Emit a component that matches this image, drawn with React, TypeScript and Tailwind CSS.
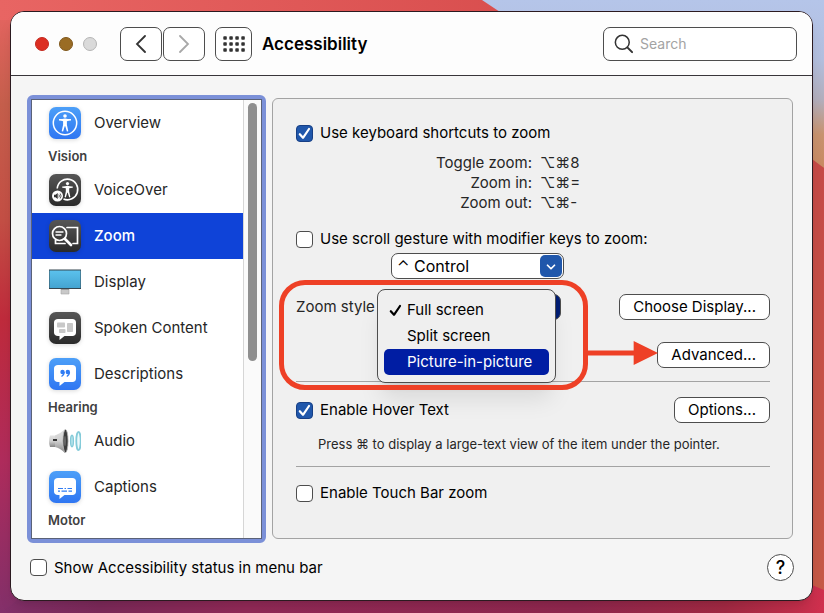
import { useState } from "react";
import type { ReactNode } from "react";
import { ChevronDown } from "lucide-react";
import clsx from "clsx";

type IconName =
  | "overview"
  | "voiceover"
  | "zoom"
  | "display"
  | "spoken"
  | "descriptions"
  | "audio"
  | "captions";

interface SidebarGroup {
  title?: string;
  items: { label: string; icon: IconName }[];
}

const groups: SidebarGroup[] = [
  { items: [{ label: "Overview", icon: "overview" }] },
  {
    title: "Vision",
    items: [
      { label: "VoiceOver", icon: "voiceover" },
      { label: "Zoom", icon: "zoom" },
      { label: "Display", icon: "display" },
      { label: "Spoken Content", icon: "spoken" },
      { label: "Descriptions", icon: "descriptions" }
    ]
  },
  {
    title: "Hearing",
    items: [
      { label: "Audio", icon: "audio" },
      { label: "Captions", icon: "captions" }
    ]
  },
  { title: "Motor", items: [] }
];

const shortcuts = [
  { label: "Toggle zoom:", keys: "⌥⌘8" },
  { label: "Zoom in:", keys: "⌥⌘=" },
  { label: "Zoom out:", keys: "⌥⌘-" }
];

const zoomStyles = ["Full screen", "Split screen", "Picture-in-picture"];

function Wallpaper() {
  return (
    <svg
      className="absolute inset-0 h-full w-full"
      viewBox="0 0 824 613"
      preserveAspectRatio="none"
      aria-hidden="true"
    >
      <defs>
        <linearGradient id="wall-left" x1="0" y1="0" x2="0" y2="1">
          <stop offset="0" stopColor="#e86563" />
          <stop offset="0.17" stopColor="#c65f4c" />
          <stop offset="0.36" stopColor="#c44f45" />
          <stop offset="0.52" stopColor="#c02b3c" />
          <stop offset="0.75" stopColor="#b02c5c" />
          <stop offset="1" stopColor="#83306a" />
        </linearGradient>
        <linearGradient id="wall-top" x1="0" y1="0" x2="1" y2="0">
          <stop offset="0" stopColor="#e86563" />
          <stop offset="1" stopColor="#d94f4f" />
        </linearGradient>
        <linearGradient id="wall-sky" x1="0" y1="0" x2="0" y2="1">
          <stop offset="0" stopColor="#b5c5e9" />
          <stop offset="0.35" stopColor="#b3bfdf" />
          <stop offset="0.6" stopColor="#b3aebb" />
          <stop offset="0.8" stopColor="#c8936f" />
          <stop offset="1" stopColor="#c98a62" />
        </linearGradient>
        <linearGradient id="wall-right" x1="0" y1="0" x2="0" y2="1">
          <stop offset="0" stopColor="#c64a47" />
          <stop offset="1" stopColor="#c65a47" />
        </linearGradient>
        <linearGradient id="wall-bottom" x1="0" y1="0" x2="1" y2="0">
          <stop offset="0" stopColor="#83306a" />
          <stop offset="0.12" stopColor="#7d2a5a" />
          <stop offset="0.3" stopColor="#932a58" />
          <stop offset="0.7" stopColor="#92284f" />
          <stop offset="0.88" stopColor="#a52a44" />
          <stop offset="1" stopColor="#d0304e" />
        </linearGradient>
      </defs>
      <rect width="824" height="613" fill="url(#wall-left)" />
      <rect width="500" height="20" fill="url(#wall-top)" />
      <path d="M482 0H824V168L500 12Z" fill="url(#wall-sky)" />
      <path d="M800 150L824 168V600H800Z" fill="url(#wall-right)" />
      <path d="M20 598H800V580L824 590V613H0Z" fill="url(#wall-bottom)" />
    </svg>
  );
}

function Tile({ dark, children }: { dark?: boolean; children: ReactNode }) {
  return (
    <svg className="size-8 shrink-0 drop-shadow-sm" viewBox="0 0 32 32" fill="none" aria-hidden="true">
      <defs>
        <linearGradient id="tile-dark" x1="0" y1="0" x2="0" y2="1">
          <stop offset="0" stopColor="#565656" />
          <stop offset="1" stopColor="#2a2a2a" />
        </linearGradient>
        <linearGradient id="tile-blue" x1="0" y1="0" x2="0" y2="1">
          <stop offset="0" stopColor="#4c9ff8" />
          <stop offset="1" stopColor="#2f76f2" />
        </linearGradient>
      </defs>
      <rect width="32" height="32" rx="7" fill={dark ? "url(#tile-dark)" : "url(#tile-blue)"} />
      {children}
    </svg>
  );
}

const figure =
  "M0-5.1C2.3-4.5 4.4-4.3 6-4.4V-3C4.600-2.800 3.200-2.500 1.900-2.200V1.300L3.300 7.700L1.900 8.100L.3 2.800H-.3L-1.900 8.100L-3.300 7.700L-1.900 1.300V-2.200C-3.200-2.500-4.600-2.800-6-3V-4.400C-4.400-4.300-2.300-4.500 0-5.100Z";
const bubble =
  "M9 7H23.500C25.700 7 27 8.300 27 10.500V20.500C27 22.700 25.700 24 23.500 24H15.500L10.500 28V24H9C6.500 24 5 22.700 5 20.500V10.500C5 8.300 6.500 7 9 7Z";

function SidebarIcon({ name }: { name: IconName }) {
  switch (name) {
    case "overview":
      return (
        <Tile>
          <circle cx="16" cy="16" r="11.700" stroke="white" strokeWidth="1.500" />
          <circle cx="16" cy="9" r="1.800" fill="white" />
          <path d={figure} transform="translate(16 16.500)" fill="white" />
        </Tile>
      );
    case "voiceover":
      return (
        <Tile dark>
          <path d="M8.200 14.500A10.300 10.300 0 1 1 14.500 25" stroke="white" strokeWidth="1.600" />
          <circle cx="18.500" cy="9.600" r="1.600" fill="white" />
          <path d={figure} transform="translate(18.500 16.300) scale(.88)" fill="white" />
          <circle cx="8.500" cy="22" r="5.500" fill="white" />
          <path d="M5 20.800H6.500L8.700 19V25L6.500 23.200H5Z" fill="#333" />
          <path d="M9.800 20.500Q11 22 9.800 23.500M11.200 19.500Q13 22 11.200 24.500" stroke="#333" strokeWidth=".8" />
        </Tile>
      );
    case "zoom":
      return (
        <Tile dark>
          <path d="M18 7.500H28.500V23.500H24M16 23.500H6.500V20" stroke="white" strokeWidth="1.700" strokeLinecap="round" />
          <circle cx="10.500" cy="13.500" r="7" stroke="white" strokeWidth="1.700" />
          <path d="M16 19L22 25" stroke="white" strokeWidth="2.600" strokeLinecap="round" />
          <path d="M7 12H14M7 15H12" stroke="white" strokeWidth="1.300" strokeLinecap="round" />
        </Tile>
      );
    case "display":
      return (
        <svg className="h-8 w-8 shrink-0" viewBox="0 0 32 32" aria-hidden="true">
          <defs>
            <linearGradient id="screen" x1="0" y1="0" x2="0" y2="1">
              <stop offset="0" stopColor="#5cc2ee" />
              <stop offset="1" stopColor="#43a3d0" />
            </linearGradient>
          </defs>
          <path d="M12 22H20V28H12Z" fill="#c9c9c9" stroke="#a5a5a5" strokeWidth=".6" />
          <path d="M12 22H20V24H12Z" fill="#9a9a9a" />
          <rect x="0" y="4" width="32" height="18.500" fill="url(#screen)" stroke="#354650" />
        </svg>
      );
    case "spoken":
      return (
        <Tile dark>
          <path d={bubble} fill="white" />
          <rect x="8" y="10.500" width="8" height="5" rx=".8" fill="#c8c8c8" />
          <rect x="18" y="11" width="6" height="9" rx=".8" fill="#c8c8c8" />
          <rect x="10" y="17" width="6.500" height="4" rx=".8" fill="#c8c8c8" />
        </Tile>
      );
    case "descriptions":
      return (
        <Tile>
          <path d={bubble} fill="white" />
          <circle cx="13.500" cy="14" r="2.200" fill="#2f7cf3" />
          <circle cx="18.800" cy="14" r="2.200" fill="#2f7cf3" />
          <path d="M15.200 14Q15.200 17 12.500 18.500M20.500 14Q20.500 17 17.800 18.500" stroke="#2f7cf3" strokeWidth="1.200" />
        </Tile>
      );
    case "audio":
      return (
        <svg className="h-8 w-8 shrink-0" viewBox="0 0 32 32" fill="none" aria-hidden="true">
          <defs>
            <linearGradient id="horn" x1="0" y1="0" x2="0" y2="1">
              <stop offset="0" stopColor="#e2e2e2" />
              <stop offset="0.5" stopColor="#cfcfcf" />
              <stop offset="1" stopColor="#858585" />
            </linearGradient>
          </defs>
          <path d="M1 10.500Q-1 16 1 22H7V10.500Z" fill="url(#horn)" />
          <path d="M6 10.500Q11 9 16 4V28Q11 23 6 22Z" fill="url(#horn)" />
          <ellipse cx="16.500" cy="16" rx="2.600" ry="11.500" fill="#3c3c3c" stroke="#bbb" strokeWidth=".8" />
          <ellipse cx="16" cy="16" rx="1" ry="5" fill="#666" />
          <path d="M4 14H8V16H4Z" fill="#333" />
          <ellipse cx="23" cy="16" rx="1.300" ry="5.600" fill="#d5f2f6" stroke="#84cbd9" strokeWidth="1.600" />
          <ellipse cx="29.500" cy="16" rx="2.200" ry="9.200" fill="#eefafc" stroke="#84cbd9" strokeWidth="1.800" />
        </svg>
      );
    case "captions":
      return (
        <Tile>
          <path d={bubble} fill="white" />
          <path d="M9 17.500H14M15.500 17.500H17M18.500 17.500H23M9 20.200H11M12.500 20.200H18M19.500 20.200H23" stroke="#2f7cf3" strokeWidth="1.200" />
        </Tile>
      );
  }
}

function CheckMark({ className }: { className?: string }) {
  return (
    <svg className={clsx("size-[17px]", className)} viewBox="0 0 17 17" fill="none" aria-hidden="true">
      <path
        d="M3.800 9.200L7 12.800L13 4"
        stroke="currentColor"
        strokeWidth="2.200"
        strokeLinecap="round"
        strokeLinejoin="round"
      />
    </svg>
  );
}

function Checkbox({ label, defaultChecked }: { label: string; defaultChecked?: boolean }) {
  return (
    <label className="flex items-center gap-[7px] text-[15px] leading-5 text-black">
      <span className="grid size-[17px] shrink-0">
        <input
          type="checkbox"
          defaultChecked={defaultChecked}
          className="peer col-start-1 row-start-1 size-[17px] appearance-none rounded-[4px] border border-[#4d4d4d] bg-white checked:border-[#173f85] checked:bg-[#2057ab]"
        />
        <CheckMark className="pointer-events-none invisible col-start-1 row-start-1 text-white peer-checked:visible" />
      </span>
      {label}
    </label>
  );
}

function PushButton({ children }: { children: ReactNode }) {
  return (
    <button className="h-[26px] rounded-[7px] border border-[#4d4d4d] bg-white px-[13px] text-[15px] leading-5 text-black">
      {children}
    </button>
  );
}

function Sidebar() {
  const [selected, setSelected] = useState("Zoom");

  return (
    <nav className="flex w-[239px] shrink-0 rounded-md border-4 border-[#7b90d8] bg-white">
      <div className="flex min-w-0 flex-1 border border-[#5a6278]">
        <div className="min-w-0 flex-1 pb-1">
          {groups.map((group, i) => (
            <div key={i}>
              {group.title && (
                <h2 className="h-[21px] pl-4 text-[13px] leading-5 font-semibold text-[#404040]">{group.title}</h2>
              )}
              {group.items.map((item) => (
                <button
                  key={item.label}
                  onClick={() => setSelected(item.label)}
                  className={clsx(
                    "flex h-[46px] w-full items-center gap-[13px] pl-[17px] text-left text-[15px]",
                    item.label === selected ? "bg-[#0f43d8] font-medium text-white" : "text-[#262626]"
                  )}
                >
                  <SidebarIcon name={item.icon} />
                  {item.label}
                </button>
              ))}
            </div>
          ))}
        </div>
        {/* Scroll bar */}
        <div className="w-[18px] border-l border-[#d6d6d6] bg-[#fafafa] px-1 pt-[3px]">
          <div className="h-[258px] rounded-full bg-[#8f8f8f]" />
        </div>
      </div>
    </nav>
  );
}

function ZoomStyleMenu() {
  const [current] = useState("Full screen");

  return (
    <div
      role="menu"
      className="absolute -top-[5px] left-[81px] z-10 w-[179px] rounded-lg border border-[#4d4d4d] bg-[#efefef] px-[6px] py-[7px] shadow-xl"
    >
      {zoomStyles.map((style) => (
        <button
          key={style}
          role="menuitemradio"
          aria-checked={style === current}
          className={clsx(
            "flex h-[26px] w-full items-center rounded-[5px] pl-[3px] text-[15px]",
            style === "Picture-in-picture" ? "bg-[#001da3] text-white" : "text-black"
          )}
        >
          <span className="w-5 shrink-0">{style === current && <CheckMark />}</span>
          {style}
        </button>
      ))}
    </div>
  );
}

function ZoomPanel() {
  return (
    <main className="mt-[3px] mb-1 min-w-0 flex-1 rounded-md border border-[#a3a3a3] bg-[#f0f0f0] pt-6 pr-[22px] pl-[23px]">
      <Checkbox label="Use keyboard shortcuts to zoom" defaultChecked />

      <dl className="mt-[10px] text-[15px] leading-5 text-[#262626]">
        {shortcuts.map((shortcut) => (
          <div key={shortcut.label} className="flex gap-2">
            <dt className="w-[236px] text-right">{shortcut.label}</dt>
            <dd>{shortcut.keys}</dd>
          </div>
        ))}
      </dl>

      <div className="mt-4">
        <Checkbox label="Use scroll gesture with modifier keys to zoom:" />
      </div>

      <div className="mt-1 ml-[95px] grid w-[173px]">
        <select
          aria-label="Modifier key"
          className="col-start-1 row-start-1 h-[26px] appearance-none rounded-[7px] border border-[#4d4d4d] bg-white pl-[5px] text-base leading-5 text-black"
        >
          <option>⌃ Control</option>
          <option>⌥ Option</option>
          <option>⌘ Command</option>
        </select>
        <span className="pointer-events-none col-start-1 row-start-1 mr-[2px] flex size-[22px] items-center justify-center self-center justify-self-end rounded-[5px] bg-[#2057ab]">
          <ChevronDown className="mt-px size-[14px] text-white" strokeWidth={3} />
        </span>
      </div>

      <div className="relative mt-[15px]">
        <div className="flex items-center">
          <label htmlFor="zoom-style" className="w-[95px] text-[15px] leading-5 text-[#262626]">
            Zoom style
          </label>
          <select
            id="zoom-style"
            className="h-[26px] w-[170px] appearance-none rounded-[7px] border border-[#4d4d4d] bg-[#001d73] text-[15px]"
          >
            {zoomStyles.map((style) => (
              <option key={style}>{style}</option>
            ))}
          </select>
          <div className="ml-auto flex">
            <PushButton>Choose Display...</PushButton>
          </div>
        </div>
        <div className="mt-[22px] flex justify-end">
          <PushButton>Advanced...</PushButton>
        </div>

        <ZoomStyleMenu />

        {/* Callout around the pop-up, with an arrow to Advanced */}
        <div className="pointer-events-none absolute -top-[14px] right-[112px] -left-[17px] z-20 flex h-[110px] items-center">
          <div className="h-full w-[309px] shrink-0 rounded-[26px] border-5 border-[#ee4026]" />
          <svg
            className="mt-9 -ml-px h-6 min-w-0 flex-1"
            viewBox="0 0 70 24"
            preserveAspectRatio="none"
            aria-hidden="true"
          >
            <path d="M0 9.500H46V0L70 12L46 24V14.500H0Z" fill="#ee4026" />
          </svg>
        </div>
      </div>

      <hr className="mt-[13px] border-[#a3a3a3]" />

      <div className="mt-[15px] flex items-center justify-between">
        <Checkbox label="Enable Hover Text" defaultChecked />
        <PushButton>Options...</PushButton>
      </div>
      <p className="mt-[11px] pl-[22px] text-[13px] leading-5 text-[#262626]">
        Press ⌘ to display a large-text view of the item under the pointer.
      </p>

      <hr className="mt-3 border-[#a3a3a3]" />

      <div className="mt-4">
        <Checkbox label="Enable Touch Bar zoom" />
      </div>
    </main>
  );
}

export default function App() {
  return (
    <div className="relative flex min-h-screen pt-[11px] pr-[11px] pb-3 pl-[10px] font-['Inter','Liberation_Sans',sans-serif]">
      <Wallpaper />

      <div className="relative flex min-w-0 flex-1 flex-col overflow-hidden rounded-[14px] border border-[#2b1a20] bg-[#f5f5f5] shadow-lg">
        <header className="flex h-[64px] items-center border-b border-[#38353a] bg-[#fdfdfd] pr-[15px] pl-6">
          <div className="flex gap-[10px]">
            <button aria-label="Close" className="size-[14px] rounded-full border border-[#c4291f] bg-[#dc2e22]" />
            <button aria-label="Minimize" className="size-[14px] rounded-full border border-[#80581c] bg-[#9a6c24]" />
            <button aria-label="Full screen" className="size-[14px] rounded-full border border-[#b5b5b5] bg-[#dadada]" />
          </div>
          <button
            aria-label="Back"
            className="ml-[23px] flex h-[34px] w-[42px] items-center justify-center rounded-[7px] border border-[#4d4d4d] bg-white text-[#333333]"
          >
            <svg className="h-[18px] w-3" viewBox="0 0 12 18" fill="none" aria-hidden="true">
              <path d="M10 1L2 9L10 17" stroke="currentColor" strokeWidth="1.800" strokeLinecap="round" />
            </svg>
          </button>
          <button
            aria-label="Forward"
            className="ml-px flex h-[34px] w-[42px] items-center justify-center rounded-[7px] border border-[#4d4d4d] bg-white text-[#a8a8a8]"
          >
            <svg className="h-[18px] w-3" viewBox="0 0 12 18" fill="none" aria-hidden="true">
              <path d="M2 1L10 9L2 17" stroke="currentColor" strokeWidth="1.800" strokeLinecap="round" />
            </svg>
          </button>
          <button
            aria-label="Show all"
            className="ml-[10px] flex h-[34px] w-[37px] items-center justify-center rounded-[7px] border border-[#4d4d4d] bg-white"
          >
            <svg className="h-4 w-[22px]" viewBox="0 0 22 16" fill="#333333" aria-hidden="true">
              {[0.3, 6.3, 12.3].map((y) =>
                [0.3, 6.3, 12.3, 18.3].map((x) => (
                  <rect key={`${x}-${y}`} x={x} y={y} width="3.500" height="3.500" rx=".8" />
                ))
              )}
            </svg>
          </button>
          <h1 className="ml-[10px] text-[17px] leading-6 font-semibold text-black">Accessibility</h1>
          <label className="ml-auto flex h-[34px] w-[194px] items-center gap-[6px] rounded-[7px] border border-[#4d4d4d] bg-white pl-[10px]">
            <svg className="size-[20px] shrink-0 text-[#333333]" viewBox="0 0 21 21" fill="none" aria-hidden="true">
              <circle cx="8.700" cy="8.700" r="7.300" stroke="currentColor" strokeWidth="1.600" />
              <path d="M14 14L19 19" stroke="currentColor" strokeWidth="2.100" strokeLinecap="round" />
            </svg>
            <input
              type="search"
              placeholder="Search"
              aria-label="Search"
              className="min-w-0 flex-1 text-[14px] outline-none placeholder:text-[#a3a3a3]"
            />
          </label>
        </header>

        <div className="flex flex-1 gap-[6px] pt-[19px] pr-[19px] pl-4">
          <Sidebar />
          <ZoomPanel />
        </div>

        <footer className="flex items-center justify-between pt-[11px] pr-[18px] pb-[19px] pl-[19px]">
          <Checkbox label="Show Accessibility status in menu bar" />
          <button
            aria-label="Help"
            className="size-[27px] rounded-full border border-[#4d4d4d] bg-white text-lg leading-6 font-medium text-black"
          >
            ?
          </button>
        </footer>
      </div>
    </div>
  );
}
